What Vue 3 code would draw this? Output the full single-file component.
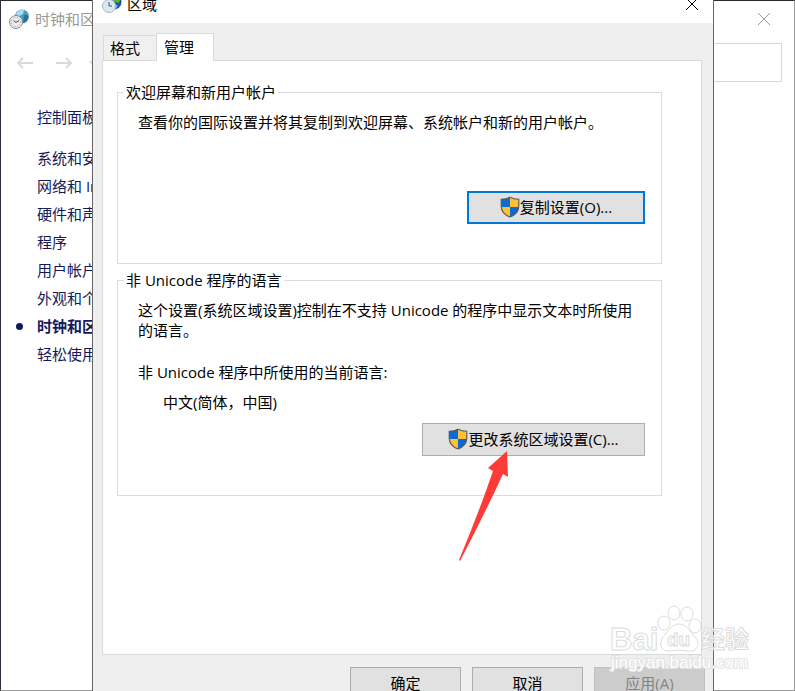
<script setup>
    import { ref } from 'vue'

    const categories = [
        '系统和安全',
        '网络和 Internet',
        '硬件和声音',
        '程序',
        '用户帐户',
        '外观和个性化',
        '时钟和区域',
        '轻松使用'
    ]
    const current = '时钟和区域'

    const tabs = ['格式', '管理']
    const activeTab = ref('管理')
    const search = ref('')
</script>

<template>
    <div class="desktop">
        <main class="explorer">
            <header class="explorer-title">
                <svg class="app-icon" viewBox="0 0 20 20" aria-hidden="true">
                    <circle cx="13" cy="7.500" r="7" fill="#4a9cc4" />
                    <path d="M7 5 Q10 0 15 1 L14 5 L9 8Z" fill="#a9dcec" />
                    <path d="M15 6 Q18 5 19.500 8 Q18 13 14 14Z" fill="#266f9c" />
                    <circle cx="7" cy="13" r="6.500" fill="#eceeee" stroke="#888" />
                    <circle cx="7" cy="13" r="4.500" fill="none" stroke="#999" stroke-dasharray="1 1.400" />
                    <path d="M4.500 11.500 L7 13.500 L10 11.500" fill="none" stroke="#444" />
                </svg>
                <h1 class="explorer-name">时钟和区域</h1>
                <button class="close" type="button" aria-label="关闭">
                    <svg viewBox="0 0 12 12"><path d="M0 0 L12 12 M12 0 L0 12" /></svg>
                </button>
            </header>
            <div class="toolbar">
                <button class="nav-button" type="button" aria-label="后退">
                    <svg viewBox="0 0 16 12"><path d="M16 7 H1 M6 2 L1 7 L6 12" /></svg>
                </button>
                <button class="nav-button" type="button" aria-label="前进">
                    <svg viewBox="0 0 16 12"><path d="M0 7 H15 M10 2 L15 7 L10 12" /></svg>
                </button>
                <button class="nav-button recent" type="button" aria-label="最近浏览的位置">
                    <svg viewBox="0 0 16 12"><path d="M1 5 L5 9 L9 5" /></svg>
                </button>
                <input v-model="search" class="search" type="search" aria-label="搜索控制面板">
            </div>
            <nav class="sidebar">
                <a class="home" href="#">控制面板主页</a>
                <ul class="categories">
                    <li v-for="item in categories" :key="item" :class="{ current: item === current }">
                        <a href="#">{{ item }}</a>
                    </li>
                </ul>
            </nav>
        </main>

        <section class="dialog" role="dialog" aria-labelledby="dialog-name">
            <header class="dialog-title">
                <svg class="app-icon" viewBox="0 0 20 20" aria-hidden="true">
                    <circle cx="12" cy="8" r="7.500" fill="#2449b5" />
                    <path d="M11 2 Q16 1 18 6 L17 9 L13 8 L11 11 L8 6Z" fill="#55b535" />
                    <path d="M13 11 L16 11 L14 15 L12 14Z" fill="#7fa8e0" />
                    <circle cx="7" cy="12" r="6.500" fill="#dce8f0" stroke="#a9b8c4" />
                    <path d="M7 8 V12 H10" fill="none" stroke="#38576e" />
                </svg>
                <h2 id="dialog-name" class="dialog-name">区域</h2>
                <button class="close" type="button" aria-label="关闭">
                    <svg viewBox="0 0 12 12"><path d="M0 0 L12 12 M12 0 L0 12" /></svg>
                </button>
            </header>

            <div class="dialog-body">
                <div class="tabs" role="tablist">
                    <button
                        v-for="tab in tabs"
                        :key="tab"
                        class="tab"
                        :class="{ active: tab === activeTab }"
                        type="button"
                        role="tab"
                        :aria-selected="tab === activeTab"
                        @click="activeTab = tab"
                    >
                        {{ tab }}
                    </button>
                </div>

                <div class="panel" role="tabpanel">
                    <fieldset class="group">
                        <legend>欢迎屏幕和新用户帐户</legend>
                        <p>查看你的国际设置并将其复制到欢迎屏幕、系统帐户和新的用户帐户。</p>
                        <button class="button copy" type="button">
                            <svg class="shield" viewBox="0 0 18 20" aria-hidden="true">
                                <path d="M9 1 Q6 3 1 3 V10 H9Z" fill="#0a6cd0" />
                                <path d="M9 1 Q12 3 17 3 V10 H9Z" fill="#ffbf36" />
                                <path d="M1 10 H9 V19 Q2 16 1 10Z" fill="#ffbf36" />
                                <path d="M9 10 H17 Q16 16 9 19Z" fill="#0a6cd0" />
                                <path d="M9 1 Q6 3 1 3 V9 Q1 16 9 19 Q17 16 17 9 V3 Q12 3 9 1Z" fill="none" stroke="#555" />
                            </svg>
                            <span>复制设置(O)...</span>
                        </button>
                    </fieldset>

                    <fieldset class="group">
                        <legend>非 Unicode 程序的语言</legend>
                        <p>这个设置(系统区域设置)控制在不支持 Unicode 的程序中显示文本时所使用的语言。</p>
                        <p class="locale-label">非 Unicode 程序中所使用的当前语言:</p>
                        <p class="locale">中文(简体，中国)</p>
                        <button class="button change" type="button">
                            <svg class="shield" viewBox="0 0 18 20" aria-hidden="true">
                                <path d="M9 1 Q6 3 1 3 V10 H9Z" fill="#0a6cd0" />
                                <path d="M9 1 Q12 3 17 3 V10 H9Z" fill="#ffbf36" />
                                <path d="M1 10 H9 V19 Q2 16 1 10Z" fill="#ffbf36" />
                                <path d="M9 10 H17 Q16 16 9 19Z" fill="#0a6cd0" />
                                <path d="M9 1 Q6 3 1 3 V9 Q1 16 9 19 Q17 16 17 9 V3 Q12 3 9 1Z" fill="none" stroke="#555" />
                            </svg>
                            <span>更改系统区域设置(C)...</span>
                        </button>
                        <svg class="arrow" viewBox="0 0 50 111" aria-hidden="true">
                            <path d="M48 0 L49 26 L44 23 Q28 58 1 110 L0 109 Q20 61 34 20 L29 17Z" fill="#ff3b38" />
                        </svg>
                    </fieldset>
                </div>

                <footer class="actions">
                    <button class="button" type="button">确定</button>
                    <button class="button" type="button">取消</button>
                    <button class="button" type="button" disabled>应用(A)</button>
                </footer>
            </div>
        </section>

        <svg class="watermark" viewBox="0 0 150 70" aria-hidden="true">
            <g class="watermark-ink">
                <ellipse cx="53" cy="17" rx="6" ry="7" />
                <ellipse cx="63" cy="7" rx="6" ry="7" />
                <ellipse cx="76" cy="8" rx="6" ry="7" />
                <ellipse cx="84" cy="20" rx="6" ry="7" />
                <path d="M68 18 C76 18 79 26 84 31 C90 37 86 46 78 45 Q68 43 59 45 C50 46 47 38 52 31 C57 26 60 18 68 18Z" />
                <text x="-1" y="44" class="latin">Bai</text>
                <text x="56" y="40" class="paw-text">du</text>
                <text x="90" y="42" class="cjk">经验</text>
            </g>
            <text x="0" y="62" class="site">jingyan.baidu.com</text>
        </svg>
    </div>
</template>

<style>
    body {
        margin: 0;
        background-color: #fff;
    }
</style>

<style scoped>
    * {
        box-sizing: border-box;
    }

    .desktop {
        position: relative;
        height: 100vh;
        overflow: hidden;
        font-family: "Open Sans", "Noto Sans CJK SC", sans-serif;
        font-size: 15px;
        line-height: 20px;
        color: #000;
    }

    h1,
    h2,
    p,
    ul {
        margin: 0;
        padding: 0;
        font-size: 15px;
        font-weight: 400;
    }

    button {
        padding: 0;
        border: 0;
        background: none;
        font: inherit;
        color: inherit;
    }

    .app-icon {
        width: 20px;
        height: 20px;
        flex: none;
    }

    .close {
        width: 12px;
        height: 12px;
        margin-left: auto;
    }
    .close svg {
        display: block;
        width: 12px;
        height: 12px;
        fill: none;
        stroke: currentColor;
    }

    .explorer {
        height: 100%;
        border: 1px solid #999;
        border-top-color: #2b2b30;
        border-left-color: #2b313c;
        background-color: #fff;
    }

    .explorer-title {
        display: flex;
        align-items: center;
        gap: 6px;
        height: 36px;
        padding: 0 24px 0 8px;
        color: #999;
    }

    .toolbar {
        display: flex;
        align-items: center;
        gap: 23px;
        height: 50px;
        padding: 0 12px 0 16px;
    }

    .nav-button {
        width: 16px;
        height: 12px;
    }
    .nav-button svg {
        display: block;
        width: 16px;
        height: 12px;
        overflow: visible;
        fill: none;
        stroke: #d9d9d9;
        stroke-width: 2;
    }
    .nav-button.recent {
        margin-left: -6px;
    }

    .search {
        width: 280px;
        height: 39px;
        margin-left: auto;
        border: 1px solid #d9d9d9;
        border-radius: 0;
        background-color: #fff;
        appearance: none;
        outline: none;
    }

    .sidebar {
        padding: 20px 0 0 36px;
    }
    .sidebar a {
        color: #14195a;
        text-decoration: none;
    }

    .categories {
        display: flex;
        flex-direction: column;
        gap: 8px;
        margin-top: 21px;
        list-style: none;
    }
    .categories .current {
        display: flex;
        align-items: center;
        gap: 14px;
        margin-left: -21px;
        font-weight: 700;
    }
    .categories .current::before {
        content: "";
        width: 7px;
        height: 7px;
        border-radius: 50%;
        background-color: #14195a;
    }

    .dialog {
        position: absolute;
        top: -14px;
        right: 81px;
        bottom: -20px;
        left: 92px;
        display: flex;
        flex-direction: column;
        border: 1px solid #666;
        background-color: #efefef;
    }

    .dialog-title {
        display: flex;
        align-items: center;
        gap: 5px;
        height: 36px;
        padding: 0 15px 2px 9px;
        background-color: #fff;
    }

    .dialog-body {
        display: flex;
        flex: 1;
        flex-direction: column;
        padding: 10px 8px 10px 9px;
    }

    .tabs {
        display: flex;
        align-items: flex-end;
        padding-left: 1px;
    }

    .tab {
        width: 53px;
        height: 25px;
        padding-right: 10px;
        border: 1px solid #d9d9d9;
        border-right: 0;
        border-bottom: 0;
        background-color: #f0f0f0;
    }
    .tab.active {
        z-index: 1;
        width: 58px;
        height: 28px;
        margin-bottom: -1px;
        padding: 0 12px 2px 0;
        border-right: 1px solid #d9d9d9;
        background-color: #fff;
    }

    .panel {
        flex: 1;
        margin-right: 3px;
        padding: 21px 39px 0 14px;
        border: 1px solid #d9d9d9;
        background-color: #fff;
    }

    .group {
        position: relative;
        display: flex;
        flex-direction: column;
        min-width: 0;
        margin: 0 0 6px;
        padding: 10px 16px 39px 20px;
        border: 1px solid #dcdcdc;
    }
    .group legend {
        margin-left: -14px;
        padding: 0 2px;
    }

    .locale-label {
        margin-top: 22px;
    }
    .locale {
        margin-top: 10px;
        padding-left: 25px;
    }

    .button {
        display: flex;
        align-items: center;
        justify-content: center;
        width: 111px;
        height: 33px;
        padding-bottom: 1px;
        border: 1px solid #adadad;
        background-color: #e1e1e1;
    }
    .button:disabled {
        border-color: #bfbfbf;
        background-color: #ccc;
        color: #838383;
    }
    .button.copy {
        align-self: flex-end;
        width: 178px;
        margin-top: 59px;
        border: 2px solid #0078d7;
    }
    .button.change {
        align-self: flex-end;
        width: 223px;
        margin-top: 11px;
    }

    .shield {
        width: 20px;
        height: 22px;
    }

    .arrow {
        position: absolute;
        right: 152px;
        bottom: -67px;
        width: 50px;
        height: 111px;
    }

    .actions {
        display: flex;
        justify-content: flex-end;
        gap: 11px;
        padding-top: 12px;
    }

    .watermark {
        position: absolute;
        right: 34px;
        bottom: 15px;
        width: 150px;
        height: 70px;
        overflow: visible;
        pointer-events: none;
    }
    .watermark-ink {
        fill: #fff;
        fill-opacity: 0.6;
        stroke: #dcdcdc;
        font-weight: 700;
    }
    .latin {
        font-family: "Liberation Sans", sans-serif;
        font-size: 31px;
    }
    .paw-text {
        font-family: "Liberation Sans", sans-serif;
        font-size: 19px;
    }
    .cjk {
        font-family: "Noto Sans CJK SC", sans-serif;
        font-size: 24px;
    }
    .site {
        fill: #fff;
        stroke: #e2e2e2;
        stroke-width: 2;
        paint-order: stroke;
        font-family: "Liberation Sans", sans-serif;
        font-size: 17px;
    }
</style>
